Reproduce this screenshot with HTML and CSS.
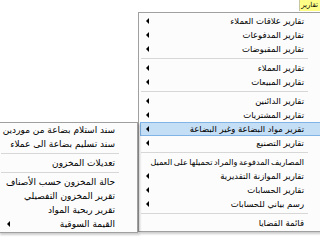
FILE: index.html
```html
<!DOCTYPE html>
<html lang="ar" dir="rtl">
<head>
    <meta charset="UTF-8">
    <meta name="viewport" content="width=device-width, initial-scale=1.0">
    <title>تقارير</title>
    <link rel="stylesheet" href="styles.css">
</head>
<body>
    <div class="menubar">
        <span class="menubar-item active">تقارير</span>
    </div>

    <ul class="menu main-menu">
        <li class="menu-item"><span>تقارير علاقات العملاء</span><i class="arrow"></i></li>
        <li class="menu-item"><span>تقارير المدفوعات</span><i class="arrow"></i></li>
        <li class="menu-item"><span>تقارير المقبوضات</span><i class="arrow"></i></li>
        <li class="menu-sep"></li>
        <li class="menu-item"><span>تقارير العملاء</span><i class="arrow"></i></li>
        <li class="menu-item"><span>تقارير المبيعات</span><i class="arrow"></i></li>
        <li class="menu-sep"></li>
        <li class="menu-item"><span>تقارير الدائنين</span><i class="arrow"></i></li>
        <li class="menu-item"><span>تقارير المشتريات</span><i class="arrow"></i></li>
        <li class="menu-item selected"><span>تقرير مواد البضاعة وغير البضاعة</span><i class="arrow"></i></li>
        <li class="menu-item"><span>تقارير التصنيع</span><i class="arrow"></i></li>
        <li class="menu-sep"></li>
        <li class="menu-item long"><span>المصاريف المدفوعة والمراد تحميلها على العميل</span></li>
        <li class="menu-item"><span>تقارير الموازنة التقديرية</span><i class="arrow"></i></li>
        <li class="menu-item"><span>تقارير الحسابات</span><i class="arrow"></i></li>
        <li class="menu-item"><span>رسم بياني للحسابات</span><i class="arrow"></i></li>
        <li class="menu-sep"></li>
        <li class="menu-item"><span>قائمة القضايا</span></li>
    </ul>

    <ul class="menu sub-menu">
        <li class="menu-item"><span>سند استلام بضاعة من موردين</span></li>
        <li class="menu-item"><span>سند تسليم بضاعة الى عملاء</span></li>
        <li class="menu-sep"></li>
        <li class="menu-item"><span>تعديلات المخزون</span></li>
        <li class="menu-sep"></li>
        <li class="menu-item"><span>حالة المخزون حسب الأصناف</span></li>
        <li class="menu-item"><span>تقرير المخزون التفصيلي</span></li>
        <li class="menu-item"><span>تقرير ربحية المواد</span></li>
        <li class="menu-item"><span>القيمة السوقية</span><i class="arrow"></i></li>
    </ul>
</body>
</html>
```

FILE: styles.css
```css
body {
    margin: 0;
    width: 320px;
    height: 240px;
    overflow: hidden;
    position: relative;
    background: #fff;
    color: #000;
    font-family: "DejaVu Sans", sans-serif;
    font-size: 8.5px;
}

.menubar {
    display: flex;
    height: 12px;
}

.menubar-item {
    padding: 0 2px 0 1px;
    line-height: 11px;
    height: 11px;
    font-size: 7px;
    white-space: nowrap;
}

.menubar-item.active {
    background-color: #ffff88;
    border-left: 1px solid #c8c8a0;
}

.menu {
    list-style: none;
    margin: 0;
    padding: 1px 0;
    position: absolute;
    box-sizing: border-box;
    background-color: #fcfcfc;
    border: 1px solid #a0a0a0;
    box-shadow: 2px 2px 2px rgba(0, 0, 0, 0.2);
}

/* dropdown under the menubar item */
.main-menu {
    top: 12px;
    left: 138px;
    right: -4px;
}

.main-menu .menu-item {
    padding: 0 17px 0 5px;
}

.main-menu .menu-item.long {
    font-size: 8px;
    word-spacing: -1px;
}

.main-menu .menu-sep {
    margin: 2px 15px 2px 2px;
}

/* submenu of the selected item */
.sub-menu {
    top: 122px;
    left: -2px;
    width: 140px;
    padding-top: 0;
    font-size: 9px;
    z-index: 1;
}

.sub-menu .menu-item {
    padding: 0 20px 0 6px;
}

.sub-menu .menu-sep {
    margin: 2px 18px 2px 2px;
}

.menu-item {
    display: flex;
    align-items: center;
    box-sizing: border-box;
    height: 14px;
    margin: 0 1px;
    border: 1px solid transparent;
    white-space: nowrap;
}

.menu-item.selected {
    background-color: #c4def5;
    border-color: #80b4e6;
}

.menu-sep {
    height: 1px;
    background-color: #d7d7d7;
}

.arrow {
    margin-right: auto;
    width: 0;
    height: 0;
    border-top: 3px solid transparent;
    border-bottom: 3px solid transparent;
    border-right: 3px solid #000;
}
```
